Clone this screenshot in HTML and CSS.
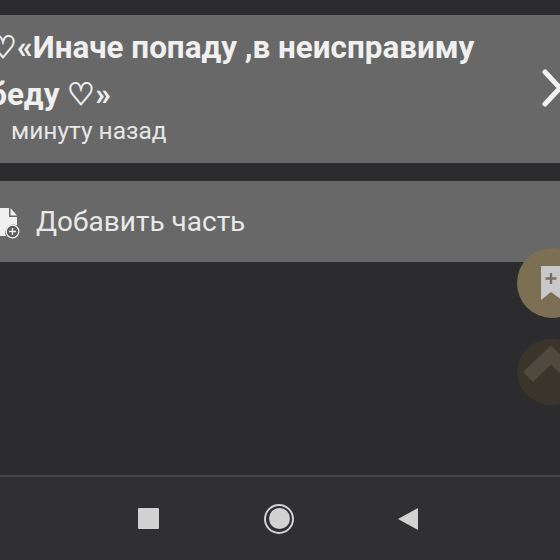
FILE: index.html
```html
<!DOCTYPE html>
<html lang="ru">
<head>
    <meta charset="UTF-8">
    <title>Части</title>
    <link rel="stylesheet" href="styles.css">
</head>
<body>
    <div class="screen">
        <div class="content">
            <div class="part-card">
                <div class="part-text">
                    <div class="part-title">♡«Иначе попаду ,в неисправиму<br>беду ♡»</div>
                    <div class="part-time">минуту назад</div>
                </div>
                <svg class="part-arrow" width="20" height="38" viewBox="0 0 20 38">
                    <path d="M3 3 L18 19 L3 35" fill="none" stroke="#f0f0f0" stroke-width="5" stroke-linecap="round" stroke-linejoin="round"/>
                </svg>
            </div>
            <div class="add-part">
                <svg class="add-icon" width="20" height="30" viewBox="0 0 20 30">
                    <path d="M-4 0 H9 V9 H17 V17.5 A8 8 0 0 0 6 28 H-4 Z" fill="#f0f0f0"/>
                    <path d="M10.5 0 L17 7.5 H10.5 Z" fill="#f0f0f0"/>
                    <circle cx="12.5" cy="23.5" r="6.3" fill="#5c5c5c" stroke="#f0f0f0" stroke-width="1.3"/>
                    <path d="M12.5 20 V27 M9 23.5 H16" stroke="#f0f0f0" stroke-width="1.3"/>
                </svg>
                <span class="add-label">Добавить часть</span>
            </div>
        </div>
        <div class="fab fab-bookmark">
            <svg width="22" height="36" viewBox="0 0 22 36">
                <path d="M1 1 H22 V35 L11 27 L1 35 Z" fill="#c8c8c8"/>
                <path d="M11 8 V19 M5.5 13.5 H16.5" stroke="#77705f" stroke-width="2.4"/>
            </svg>
        </div>
        <div class="fab fab-top">
            <svg width="68" height="66" viewBox="0 0 68 66">
                <path d="M11 38 L34 16 L57 38" fill="none" stroke="#52493e" stroke-width="14"/>
            </svg>
        </div>
        <div class="nav-bar">
            <span class="nav-square"></span>
            <span class="nav-circle"><span class="nav-dot"></span></span>
            <svg class="nav-back" width="22" height="24" viewBox="0 0 22 24">
                <path d="M1 12 L21 1 V23 Z" fill="#d2d2d2"/>
            </svg>
        </div>
    </div>
</body>
</html>
```

FILE: styles.css
```css
html, body {
    margin: 0;
    padding: 0;
    background-color: #2c2c2e;
}
.screen {
    position: relative;
    width: 560px;
    height: 560px;
    overflow: hidden;
    display: flex;
    flex-direction: column;
    font-family: Roboto, "Noto Sans", sans-serif;
}
.content {
    flex: 1;
    padding-top: 15px;
}
.part-card {
    height: 148px;
    background-color: #686868;
    display: flex;
    justify-content: space-between;
    align-items: center;
}
.part-text {
    margin-left: -11px;
    margin-top: -9px;
}
.part-title {
    font-size: 31.4px;
    font-weight: 700;
    line-height: 47px;
    color: #f0f0f0;
    white-space: nowrap;
}
.part-time {
    font-size: 24.5px;
    line-height: 28px;
    color: #e6e6e6;
    margin-left: 22px;
    margin-top: -1px;
}
.part-arrow {
    margin-right: -2px;
    margin-top: -2px;
}
.add-part {
    margin-top: 18px;
    height: 81px;
    background-color: #686868;
    display: flex;
    align-items: center;
    gap: 16px;
}
.add-icon {
    margin-top: 2px;
    overflow: visible;
}
.add-label {
    font-size: 28px;
    color: #e8e8e8;
}
.fab {
    position: absolute;
    left: 517px;
    border-radius: 50%;
    display: flex;
    align-items: center;
}
.fab-bookmark {
    top: 248px;
    width: 70px;
    height: 70px;
    background-color: #7d6f54;
    padding-left: 23px;
    box-sizing: border-box;
}
.fab-top {
    top: 339px;
    width: 68px;
    height: 66px;
    background-color: #3a342b;
}
.nav-bar {
    height: 83px;
    border-top: 2px solid #464648;
    background-color: #303033;
    display: flex;
    align-items: center;
    justify-content: center;
    gap: 105px;
    padding-right: 3px;
}
.nav-square {
    width: 21px;
    height: 21px;
    background-color: #d2d2d2;
    border-radius: 1px;
}
.nav-circle {
    width: 26px;
    height: 26px;
    border: 2px solid #d2d2d2;
    border-radius: 50%;
    display: flex;
    align-items: center;
    justify-content: center;
}
.nav-dot {
    width: 21px;
    height: 21px;
    background-color: #d2d2d2;
    border-radius: 50%;
}
.nav-back {
    margin-left: -2px;
}
```
